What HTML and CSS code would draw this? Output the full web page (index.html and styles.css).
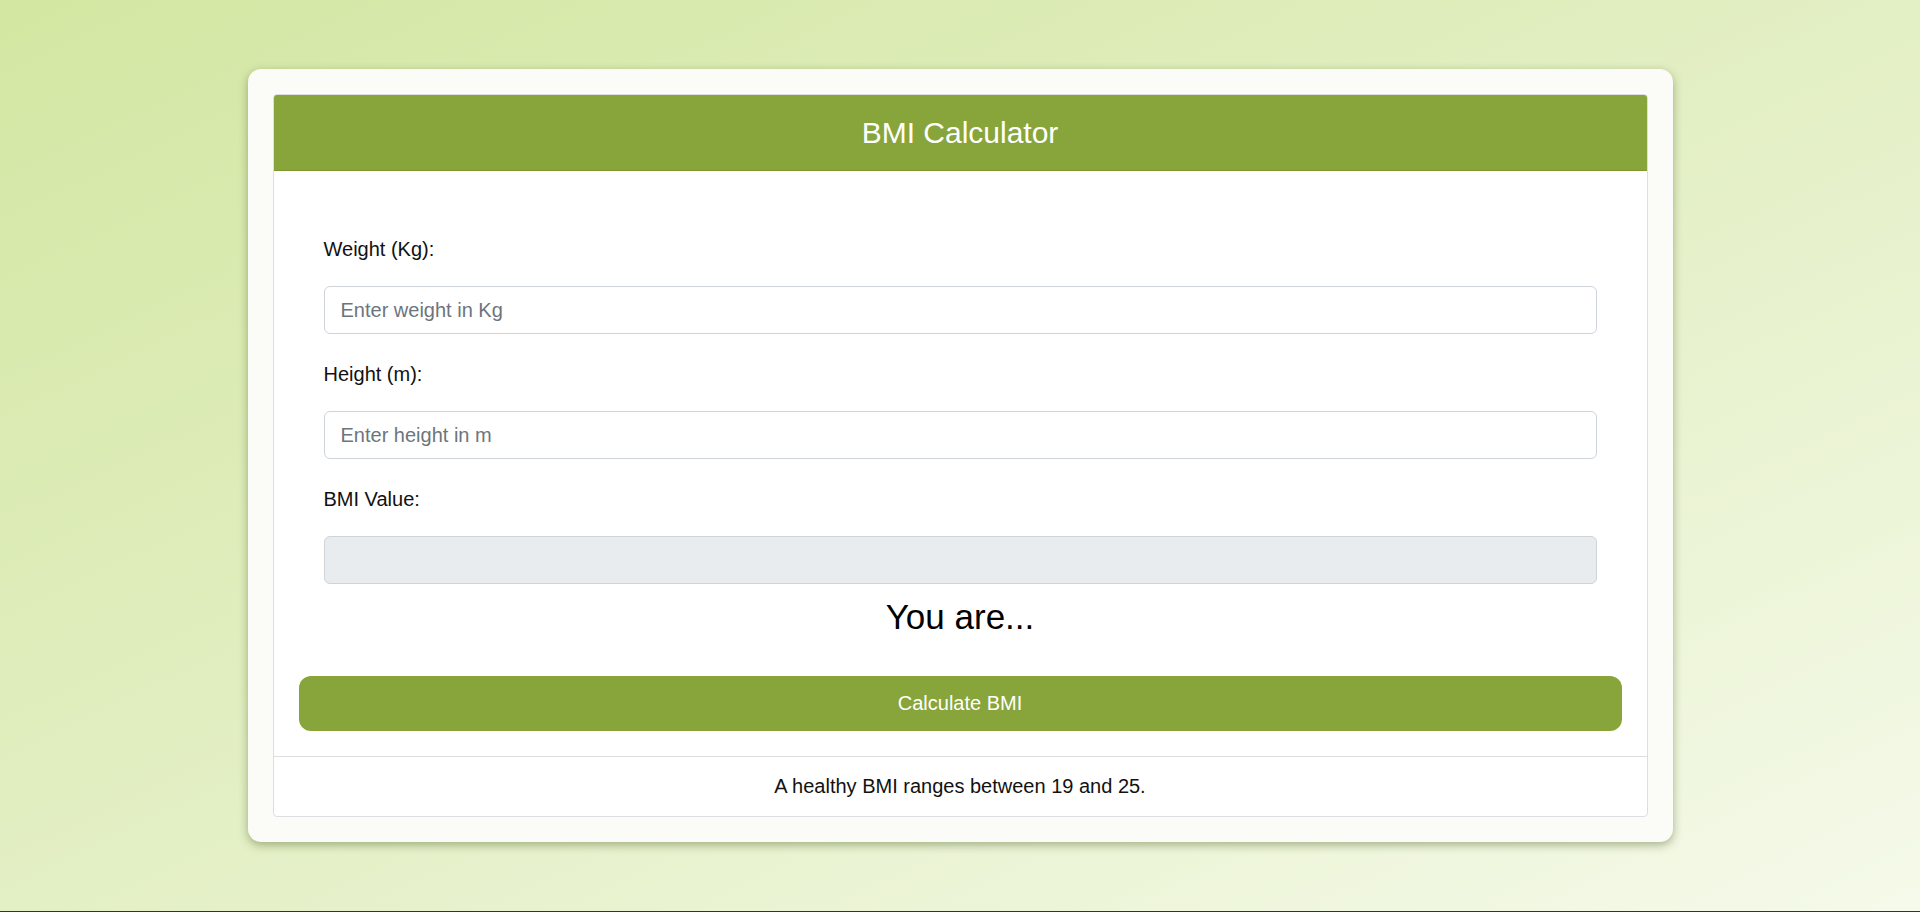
FILE: index.html
```html
<!DOCTYPE html>
<html lang="en">
<head>
<meta charset="utf-8">
<title>BMI Calculator</title>
<link rel="stylesheet" href="styles.css">
</head>
<body>
  <div class="panel">
    <div class="card">
      <div class="card-header">BMI Calculator</div>
      <div class="card-body">
        <form class="bmi-form">
          <label class="field-label" for="weight">Weight (Kg):</label>
          <input class="field-input" id="weight" type="text" placeholder="Enter weight in Kg">
          <label class="field-label" for="height">Height (m):</label>
          <input class="field-input" id="height" type="text" placeholder="Enter height in m">
          <label class="field-label" for="bmi">BMI Value:</label>
          <input class="field-input field-input-last" id="bmi" type="text" disabled>
          <h2 class="result">You are...</h2>
        </form>
        <button class="calc-btn" type="button">Calculate BMI</button>
      </div>
      <div class="card-footer">A healthy BMI ranges between 19 and 25.</div>
    </div>
  </div>
</body>
</html>
```

FILE: styles.css
```css
html {
  background: #333333;
}

body {
  margin: 0;
  height: calc(100vh - 1px);
  box-sizing: border-box;
  padding-top: 69px;
  background: linear-gradient(to bottom right, #d3e7a2 0%, #e3efc4 50%, #f5faea 100%);
  font-family: "Liberation Sans", Arial, sans-serif;
  color: #111111;
}

.panel {
  width: 1425px;
  margin: 0 auto;
  box-sizing: border-box;
  padding: 25px;
  background: #fbfcf7;
  border-radius: 13px;
  box-shadow: 0 3px 10px rgba(70, 90, 30, 0.45);
}

.card {
  background: #ffffff;
  border: 1px solid #dcdfe2;
  border-radius: 4px;
  overflow: hidden;
}

.card-header {
  height: 75px;
  background: #87a53a;
  border-bottom: 1px solid #7b9833;
  display: flex;
  align-items: center;
  justify-content: center;
  color: #ffffff;
  font-size: 30px;
}

.card-body {
  padding: 63px 25px 25px;
}

.bmi-form {
  padding: 0 25px;
}

.field-label {
  display: block;
  font-size: 20px;
  line-height: 30px;
  margin-bottom: 22px;
  color: #111111;
}

.field-input {
  display: block;
  width: 100%;
  box-sizing: border-box;
  height: 48px;
  margin: 0 0 25px;
  padding: 0 16px;
  font-family: "Liberation Sans", Arial, sans-serif;
  font-size: 20px;
  color: #495057;
  background: #ffffff;
  border: 1px solid #ced4da;
  border-radius: 6px;
  outline: none;
}

.field-input::placeholder {
  color: #6c757d;
}

.field-input:disabled {
  background: #e9ecef;
}

.field-input-last {
  margin-bottom: 12px;
}

.result {
  margin: 0;
  font-size: 35px;
  line-height: 41px;
  font-weight: normal;
  text-align: center;
  color: #000000;
}

.calc-btn {
  display: block;
  width: 100%;
  height: 55px;
  margin-top: 39px;
  padding: 0;
  border: none;
  border-radius: 12px;
  background: #87a53a;
  color: #ffffff;
  font-family: "Liberation Sans", Arial, sans-serif;
  font-size: 20px;
  cursor: pointer;
}

.card-footer {
  border-top: 1px solid #dcdfe2;
  padding: 14px 20px 15px;
  font-size: 20px;
  line-height: 30px;
  text-align: center;
  color: #111111;
}
```
